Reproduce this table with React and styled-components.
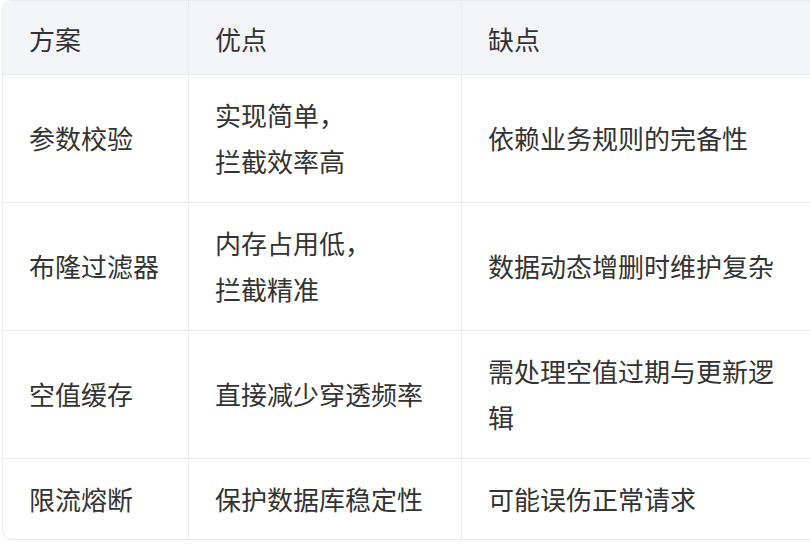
import styled, { createGlobalStyle } from "styled-components";

const GlobalStyle = createGlobalStyle`
  html, body {
    margin: 0;
    padding: 0;
    background: #ffffff;
    overflow: hidden;
  }
  body {
    font-family: "Noto Sans CJK SC", "Noto Sans", sans-serif;
    color: #333333;
  }
`;

const rows = [
  { plan: "参数校验", pros: ["实现简单，", "拦截效率高"], cons: ["依赖业务规则的完备性"] },
  { plan: "布隆过滤器", pros: ["内存占用低，", "拦截精准"], cons: ["数据动态增删时维护复杂"] },
  { plan: "空值缓存", pros: ["直接减少穿透频率"], cons: ["需处理空值过期与更新逻辑"] },
  { plan: "限流熔断", pros: ["保护数据库稳定性"], cons: ["可能误伤正常请求"] },
];

function App() {
  return (
    <>
      <GlobalStyle />
      <Page>
        <TableFrame>
          <Table>
            <colgroup>
              <col style={{ width: 186 }} />
              <col style={{ width: 273 }} />
              <col style={{ width: 360 }} />
            </colgroup>
            <thead>
              <tr>
                <HeadCell>方案</HeadCell>
                <HeadCell>优点</HeadCell>
                <HeadCell $last>缺点</HeadCell>
              </tr>
            </thead>
            <tbody>
              {rows.map((row, i) => (
                <tr key={row.plan}>
                  <Cell $bottom={i === rows.length - 1}>{row.plan}</Cell>
                  <Cell $bottom={i === rows.length - 1}>
                    {row.pros.map((line) => (
                      <Line key={line}>{line}</Line>
                    ))}
                  </Cell>
                  <Cell $bottom={i === rows.length - 1} $last>
                    {row.cons.map((line) => (
                      <Line key={line}>{line}</Line>
                    ))}
                  </Cell>
                </tr>
              ))}
            </tbody>
          </Table>
        </TableFrame>
      </Page>
    </>
  );
}

const Page = styled.div`
  width: 810px;
  height: 544px;
  padding-left: 2px;
  box-sizing: border-box;
  overflow: hidden;
`;

const TableFrame = styled.div`
  width: 819px;
  border: 1px solid #ebebeb;
  border-radius: 10px;
  overflow: hidden;
  box-sizing: border-box;
`;

const Table = styled.table`
  width: 100%;
  table-layout: fixed;
  border-collapse: separate;
  border-spacing: 0;
  font-size: 26px;
  line-height: 46.5px;
`;

const HeadCell = styled.th`
  background: #f4f5f8;
  font-weight: 400;
  text-align: left;
  padding: 15px 28px 11px 26px;
  border-bottom: 1px solid #ebebeb;
  border-right: ${(p) => (p.$last ? "none" : "1px solid #ebebeb")};
  color: #333333;
`;

const Cell = styled.td`
  padding: 17px 28px 17px 26px;
  vertical-align: middle;
  border-bottom: ${(p) => (p.$bottom ? "none" : "1px solid #ebebeb")};
  border-right: ${(p) => (p.$last ? "none" : "1px solid #ebebeb")};
  color: #333333;
`;

const Line = styled.div`
  white-space: normal;
`;

export default App;
